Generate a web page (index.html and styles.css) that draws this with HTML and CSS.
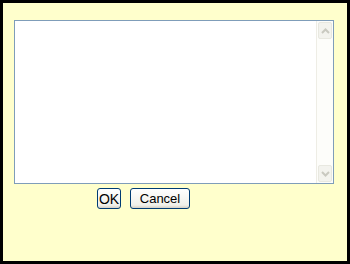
FILE: index.html
```html
<!DOCTYPE html>
<html lang="en">
<head>
    <meta charset="UTF-8">
    <title>Dialog</title>
    <link rel="stylesheet" href="styles.css">
</head>
<body>

<div class="dialog">
    <!-- Text box with a disabled scrollbar -->
    <div class="text-box">
        <textarea class="text-input"></textarea>
        <div class="scrollbar">
            <div class="scroll-btn">
                <svg width="9" height="6" viewBox="0 0 9 6"><path d="M1 5 L4.5 1.5 L8 5" fill="none" stroke="#c9c9c0" stroke-width="2"/></svg>
            </div>
            <div class="scroll-track"></div>
            <div class="scroll-btn">
                <svg width="9" height="6" viewBox="0 0 9 6"><path d="M1 1 L4.5 4.5 L8 1" fill="none" stroke="#c9c9c0" stroke-width="2"/></svg>
            </div>
        </div>
    </div>

    <div class="buttons">
        <button class="btn btn-ok">OK</button>
        <button class="btn btn-cancel">Cancel</button>
    </div>
</div>

</body>
</html>
```

FILE: styles.css
```css
html, body {
    margin: 0;
    padding: 0;
}

.dialog {
    box-sizing: border-box;
    width: 350px;
    height: 264px;
    border: 3px solid #000;
    background-color: #ffffcc;
    padding: 17px 0 0 11px;
    font-family: "Liberation Sans", Arial, sans-serif;
}

.text-box {
    box-sizing: border-box;
    display: flex;
    width: 320px;
    height: 164px;
    border: 1px solid #7f9db9;
    background: #fff;
}

.text-input {
    flex: 1;
    border: none;
    margin: 0;
    padding: 2px;
    resize: none;
    outline: none;
    background: #fff;
}

.scrollbar {
    width: 17px;
    display: flex;
    flex-direction: column;
    background: #fdfdfa;
    border-left: 1px solid #eeede5;
    box-sizing: border-box;
}

.scroll-btn {
    box-sizing: border-box;
    height: 17px;
    margin: 1px;
    border: 1px solid #e8e8e0;
    border-radius: 2px;
    background: #f3f3ee;
    display: flex;
    align-items: center;
    justify-content: center;
}

.scroll-track {
    flex: 1;
}

.buttons {
    display: flex;
    gap: 9px;
    margin: 4px 0 0 83px;
}

.btn {
    box-sizing: border-box;
    height: 21px;
    padding: 0;
    border: 1px solid #003c74;
    border-radius: 3px;
    background: linear-gradient(#ffffff, #f0f0ea 85%, #d6d0c5);
    font-family: "Liberation Sans", Arial, sans-serif;
    font-size: 13px;
    color: #000;
}

.btn-ok {
    width: 24px;
    font-size: 14px;
}

.btn-cancel {
    width: 60px;
}
```
